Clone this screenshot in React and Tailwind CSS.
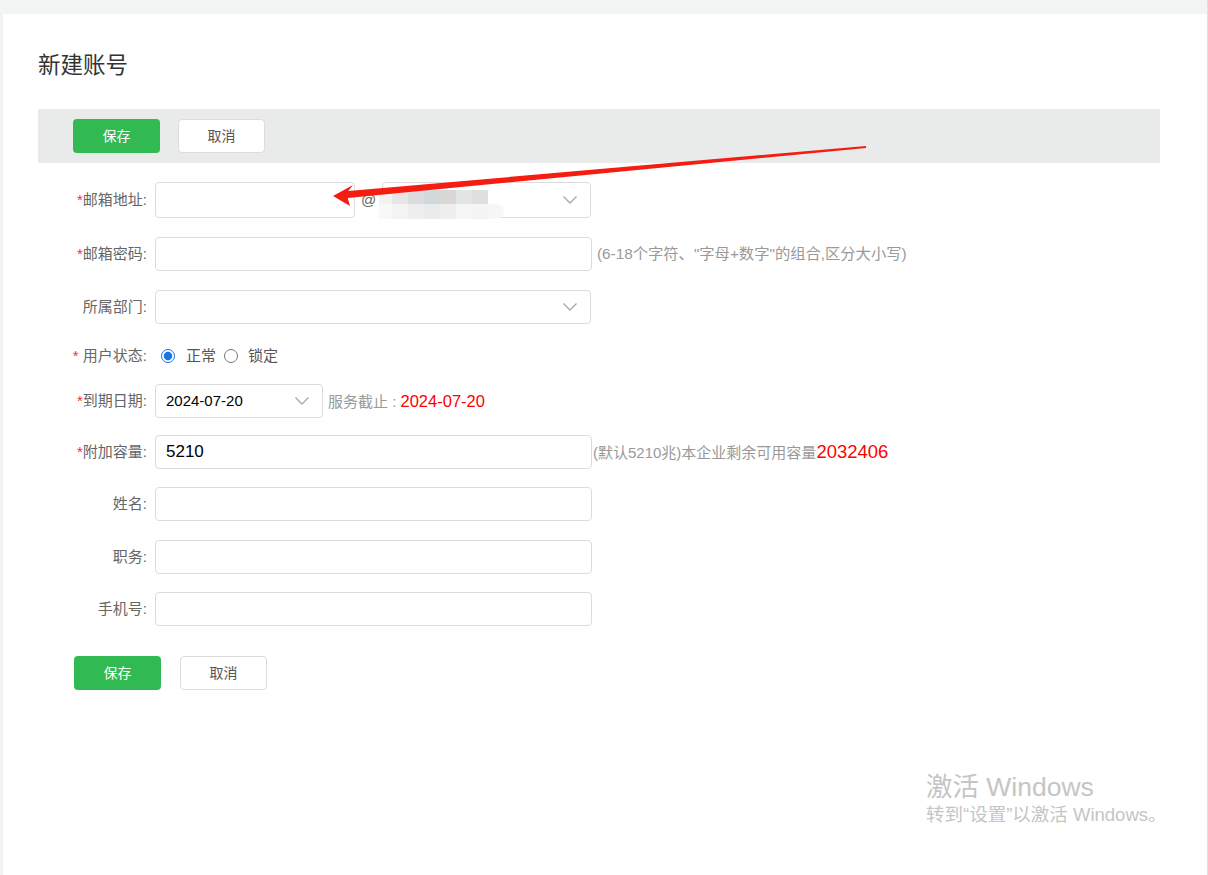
import { useState } from 'react';

const FONT = { fontFamily: '"Liberation Sans", "Noto Sans CJK SC", Arial, sans-serif' };

function Chevron() {
  return (
    <svg width="16" height="10" viewBox="0 0 16 10" className="shrink-0">
      <path d="M1.5 1.5 L8 8 L14.5 1.5" fill="none" stroke="#a9a9a9" strokeWidth="1.4" />
    </svg>
  );
}

function Label({ required, children, spaced }) {
  return (
    <div className="w-[109px] shrink-0 mr-2 text-right text-[15px] text-[#666]">
      {required && <span className="text-[#ff2a2a]">{spaced ? '* ' : '*'}</span>}
      {children}:
    </div>
  );
}

function TextInput({ className = 'w-[437px]', value = '', h = 'h-[34px]', big }) {
  return (
    <div
      className={`${className} ${h} border border-[#dcdcdc] rounded-[4px] bg-white flex items-center px-[10px] ${
        big ? 'text-[17px]' : 'text-[15px]'
      } text-black`}
    >
      {value}
    </div>
  );
}

function Select({ className, value = '', h = 'h-[34px]' }) {
  return (
    <div
      className={`${className} ${h} border border-[#dcdcdc] rounded-[4px] bg-white flex items-center justify-between pl-[10px] pr-[12px] text-[15px] text-black`}
    >
      <span>{value}</span>
      <Chevron />
    </div>
  );
}

function Mosaic() {
  const top = ['#e6e6e8', '#dcdcdc', '#d3d8db', '#d9d6d6', '#e3e4e4', '#dfdfdf'];
  const bottom = ['#f3f3f3', '#eeeeee', '#ebebec', '#efeeee', '#f5f6f6', '#f4f4f4', '#f7f7f7'];
  return (
    <div className="absolute left-[-3px] top-[8px] flex flex-col">
      <div className="flex">
        <div className="w-[13px] h-[14px] bg-[#f2f2f3]" />
        {top.map((c, i) => (
          <div key={i} className="w-[16px] h-[14px]" style={{ background: c }} />
        ))}
      </div>
      <div className="flex">
        <div className="w-[13px] h-[15px] bg-[#f8f8f8]" />
        {bottom.map((c, i) => (
          <div key={i} className={`w-[16px] h-[15px] ${i === 6 ? 'rounded-r-full' : ''}`} style={{ background: c }} />
        ))}
      </div>
    </div>
  );
}

function Buttons({ className = 'gap-[18px]' }) {
  return (
    <div className={`flex ${className}`}>
      <button className="w-[87px] h-[34px] rounded-[4px] bg-[#31b952] text-white text-[14px]">保存</button>
      <button className="w-[87px] h-[34px] rounded-[4px] bg-white border border-[#dcdcdc] text-[#555] text-[14px]">
        取消
      </button>
    </div>
  );
}

export default function App() {
  const [status, setStatus] = useState('normal');

  return (
    <div className="relative w-[1208px] h-[875px] bg-[#f2f3f3] overflow-hidden" style={FONT}>
      <div className="absolute right-0 top-0 w-px h-full bg-[#e0e0e0]" />
      <div className="ml-[3px] mt-[14px] w-[1204px] h-[861px] bg-white pl-[35px]">
        <h1 className="pt-[37px] text-[22.5px] leading-[30px] text-[#333]">新建账号</h1>

        <div className="mt-[28px] w-[1122px] h-[54px] bg-[#e9eaea] flex items-center pl-[35px]">
          <Buttons />
        </div>

        <div className="mt-[19px] flex items-center h-[36px]">
          <Label required>邮箱地址</Label>
          <TextInput className="w-[200px]" h="h-[36px]" />
          <span className="ml-[6px] mr-[6px] text-[15px] text-[#666]">@</span>
          <div className="relative">
            <Select className="w-[209px]" h="h-[36px]" />
            <Mosaic />
          </div>
        </div>

        <div className="mt-[19px] flex items-center h-[34px]">
          <Label required>邮箱密码</Label>
          <TextInput />
          <span className="ml-[5px] text-[15.3px] text-[#999]">(6-18个字符、"字母+数字"的组合,区分大小写)</span>
        </div>

        <div className="mt-[19px] flex items-center h-[34px]">
          <Label>所属部门</Label>
          <Select className="w-[436px]" />
        </div>

        <div className="mt-[15px] flex items-center h-[34px]">
          <Label required spaced>用户状态</Label>
          <label className="flex items-center text-[15px] text-[#555] mr-[8px]">
            <input
              type="radio"
              name="status"
              className="w-[14px] h-[14px] ml-[6px] mr-[11px] accent-[#1a73e8]"
              checked={status === 'normal'}
              onChange={() => setStatus('normal')}
            />
            正常
          </label>
          <label className="flex items-center text-[15px] text-[#555]">
            <input
              type="radio"
              name="status"
              className="w-[14px] h-[14px] mr-[10px]"
              checked={status === 'locked'}
              onChange={() => setStatus('locked')}
            />
            锁定
          </label>
        </div>

        <div className="mt-[11px] flex items-center h-[34px]">
          <Label required>到期日期</Label>
          <Select className="w-[168px]" value="2024-07-20" />
          <span className="ml-[5px] text-[15px] text-[#999]">
            服务截止 : <span className="text-[16.5px] text-[#ff0000]">2024-07-20</span>
          </span>
        </div>

        <div className="mt-[17px] flex items-center h-[34px]">
          <Label required>附加容量</Label>
          <TextInput value="5210" big />
          <span className="ml-[1px] text-[15px] text-[#999]">
            (默认5210兆)本企业剩余可用容量<span className="text-[18.5px] text-[#ff0000]">2032406</span>
          </span>
        </div>

        <div className="mt-[18px] flex items-center h-[34px]">
          <Label>姓名</Label>
          <TextInput />
        </div>

        <div className="mt-[19px] flex items-center h-[34px]">
          <Label>职务</Label>
          <TextInput />
        </div>

        <div className="mt-[18px] flex items-center h-[34px]">
          <Label>手机号</Label>
          <TextInput />
        </div>

        <Buttons className="mt-[30px] ml-[36px] gap-[19px]" />
      </div>

      <svg className="absolute left-0 top-0 pointer-events-none" width="1208" height="875">
        <polygon
          points="866,146 866,148 347.7,198 350,206 333,196 353,185 348.3,191"
          fill="#f51c12"
        />
      </svg>

      <div className="absolute left-[926px] top-[770px] text-[#c5c5c5]">
        <div className="text-[26.5px] leading-[34px]">激活 Windows</div>
        <div className="text-[18.5px] leading-[24px] mt-[-1px]">转到“设置”以激活 Windows。</div>
      </div>
    </div>
  );
}
